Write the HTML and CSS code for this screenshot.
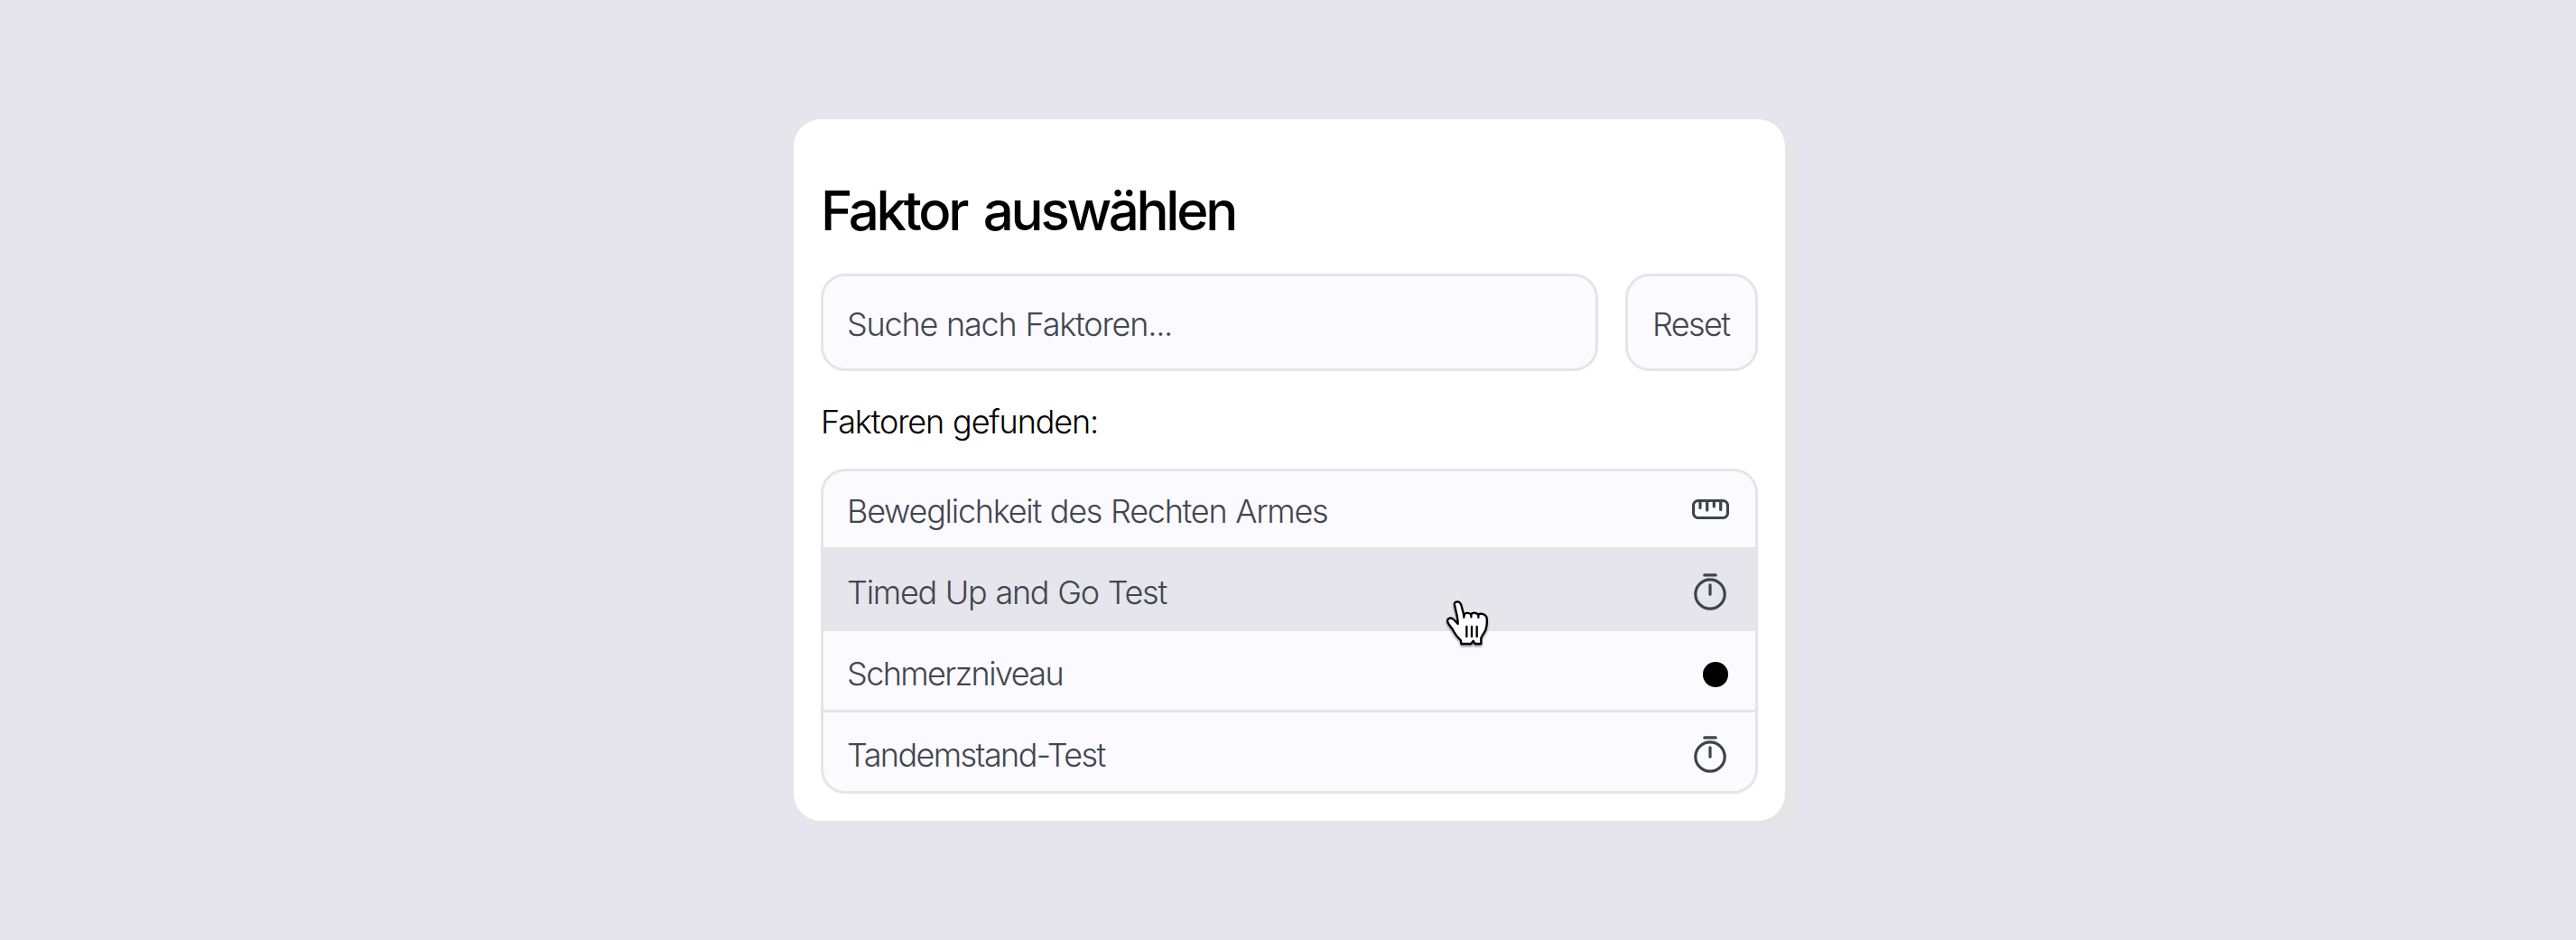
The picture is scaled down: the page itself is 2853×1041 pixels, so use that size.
FILE: index.html
```html
<!DOCTYPE html>
<html lang="de">
<head>
<meta charset="utf-8">
<title>Faktor auswählen</title>
<link rel="stylesheet" href="styles.css">
</head>
<body>
<main class="card">
  <h1 class="title">Faktor auswählen</h1>
  <div class="search">
    <div class="field">Suche nach Faktoren...</div>
    <div class="reset" role="button">Reset</div>
  </div>
  <p class="found">Faktoren gefunden:</p>
  <ul class="list">
    <li class="row"><span class="label">Beweglichkeit des Rechten Armes</span>
      <svg class="icon ruler" width="41" height="22" viewBox="0 0 41 22"><rect x="1.5" y="1.5" width="38" height="19" rx="5.5"/><path d="M9 2v7.500M16.700 2v10M24.300 2v6M31.700 2v9.500"/></svg></li>
    <li class="row row-active"><span class="label">Timed Up and Go Test</span>
      <svg class="icon watch" width="36" height="41" viewBox="0 0 36 41"><circle cx="18" cy="23" r="16.200"/><path d="M11.800 1.900h12.400M18 12.800v10.400"/></svg></li>
    <li class="row"><span class="label label-tight">Schmerzniveau</span><span class="dot"></span></li>
    <li class="row"><span class="label label-tight">Tandemstand-Test</span>
      <svg class="icon watch" width="36" height="41" viewBox="0 0 36 41"><circle cx="18" cy="23" r="16.200"/><path d="M11.800 1.900h12.400M18 12.800v10.400"/></svg></li>
  </ul>
  <svg class="cursor" width="70" height="70" viewBox="0 0 210 210"><path d="M63 45C61 36 66 34 74 34C81 35 84 40 86 49L94 80C96 70 110 69 117 76C123 69 136 70 141 77C148 72 163 74 169 84C172 98 170 115 166 128C161 139 154 146 151 155L151 174L131 174L125 164L118 174L85 174L84 163C74 152 67 146 61 134C54 119 40 109 39 98C40 88 51 85 60 93L74 108C75 88 67 66 63 45Z"/><path d="M94 80v6M118 76v9M142 77v9"/><path d="M103 117v33M120 117v33M137 117v33"/></svg>
</main>
</body>
</html>
```
FILE: styles.css
```css
* { box-sizing: border-box; margin: 0; padding: 0; }
body {
  height: 1041px;
  padding: 132px 876px 0 879px;
  background: #e6e5ee;
  color: #000;
  font-family: Inter, "Liberation Sans", sans-serif;
  font-size: 36px;
  font-weight: 300;
  line-height: 48px;
  letter-spacing: -1.25px;
  word-spacing: 1px;
}
.card {
  position: relative;
  height: 777px;
  padding: 62px 30px 30px;
  border-radius: 30px;
  background: #fff;
  box-shadow: 12px 12px 15px #e5e5e8, 0 0 4px #e3e3e8;
}
.title {
  height: 78px;
  font-size: 60px;
  font-weight: 500;
  line-height: 78px;
  letter-spacing: -3.3px;
  word-spacing: 6px;
}
.search { display: flex; gap: 30px; height: 108px; margin-top: 31px; }
.field, .reset {
  display: flex;
  align-items: center;
  padding-top: 4px;
  border: 3px solid #e5e5e8;
  border-radius: 27px;
  background: #fafaff;
  color: #42464f;
}
.field { flex: 1; padding-left: 26px; letter-spacing: -1.2px; }
.reset { width: 147px; padding-left: 27px; letter-spacing: -1.6px; }
.found { height: 48px; margin: 32px 0 28px; letter-spacing: -1.15px; }
.list {
  height: 360px;
  border: 3px solid #e5e5e8;
  border-radius: 27px;
  background: #fafaff;
  color: #42464f;
  list-style: none;
  overflow: hidden;
}
.row {
  display: flex;
  align-items: center;
  justify-content: space-between;
  height: 90px;
  padding: 6px 30px 0 26px;
  border-bottom: 3px solid #e5e5e8;
}
.row:first-child { height: 87px; padding: 0 29px 0 26px; }
.row:first-child .label { padding-top: 4px; }
.row:last-child { height: 87px; border-bottom: 0; }
.row-active { background: #e5e5eb; }
.label-tight { letter-spacing: -1.6px; }
.icon { fill: none; stroke: #3f434b; stroke-width: 3.2; stroke-linecap: round; }
.watch { margin-right: 2px; }
.dot { width: 28px; height: 28px; margin-top: 3px; border-radius: 50%; background: #000; }
.cursor {
  position: absolute;
  left: 711px;
  top: 523px;
  fill: #fff;
  stroke: #000;
  stroke-width: 7;
  stroke-linejoin: round;
  stroke-linecap: round;
  filter: drop-shadow(0 2px 1px rgba(0, 0, 0, .4));
}
```
